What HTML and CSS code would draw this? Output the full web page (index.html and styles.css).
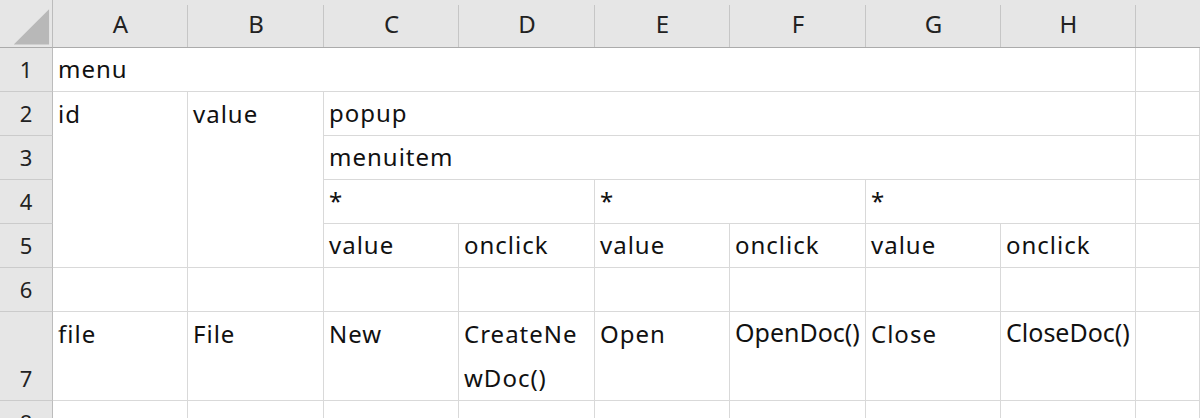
FILE: index.html
```html
<!DOCTYPE html>
<html lang="ja">
<head>
<meta charset="utf-8">
<title>menu - sheet</title>
<link rel="stylesheet" href="styles.css">
</head>
<body>
<div class="sheet">
  <!-- column headers -->
  <div class="corner">
    <svg class="corner-mark" width="53" height="48" viewBox="0 0 53 48"><polygon points="14,45 50,9 50,45" fill="#b8b8b8"/></svg>
  </div>
  <div class="ch">A</div>
  <div class="ch">B</div>
  <div class="ch">C</div>
  <div class="ch">D</div>
  <div class="ch">E</div>
  <div class="ch">F</div>
  <div class="ch">G</div>
  <div class="ch">H</div>
  <div class="ch ch-last"></div>

  <!-- row 1 -->
  <div class="rh">1</div>
  <div class="c span8">menu</div>
  <div class="c"></div>

  <!-- row 2 -->
  <div class="rh">2</div>
  <div class="c rows4 top">id</div>
  <div class="c rows4 top">value</div>
  <div class="c span6">popup</div>
  <div class="c"></div>

  <!-- row 3 -->
  <div class="rh">3</div>
  <div class="c span6">menuitem</div>
  <div class="c"></div>

  <!-- row 4 -->
  <div class="rh">4</div>
  <div class="c span2">*</div>
  <div class="c span2">*</div>
  <div class="c span2">*</div>
  <div class="c"></div>

  <!-- row 5 -->
  <div class="rh">5</div>
  <div class="c">value</div>
  <div class="c">onclick</div>
  <div class="c">value</div>
  <div class="c">onclick</div>
  <div class="c">value</div>
  <div class="c">onclick</div>
  <div class="c"></div>

  <!-- row 6 -->
  <div class="rh">6</div>
  <div class="c"></div>
  <div class="c"></div>
  <div class="c"></div>
  <div class="c"></div>
  <div class="c"></div>
  <div class="c"></div>
  <div class="c"></div>
  <div class="c"></div>
  <div class="c"></div>

  <!-- row 7 -->
  <div class="rh">7</div>
  <div class="c wrap">file</div>
  <div class="c wrap">File</div>
  <div class="c wrap">New</div>
  <div class="c wrap">CreateNewDoc()</div>
  <div class="c wrap">Open</div>
  <div class="c wrap"><span class="tight">OpenDoc()</span></div>
  <div class="c wrap">Close</div>
  <div class="c wrap"><span class="tight">CloseDoc()</span></div>
  <div class="c wrap"></div>

  <!-- row 8 -->
  <div class="rh">8</div>
  <div class="c"></div>
  <div class="c"></div>
  <div class="c"></div>
  <div class="c"></div>
  <div class="c"></div>
  <div class="c"></div>
  <div class="c"></div>
  <div class="c"></div>
  <div class="c"></div>
</div>
</body>
</html>
```

FILE: styles.css
```css
html, body {
  margin: 0;
  padding: 0;
  background: #ffffff;
  overflow: hidden;
}

.sheet {
  display: grid;
  width: 1200px;
  grid-template-columns: 53px 135px 136px 135px 136px 135px 136px 135px 135px 1fr;
  grid-template-rows: 48px repeat(6, 44px) 89px 44px;
  font-family: "Noto Sans", "Noto Sans CJK JP", sans-serif;
  color: #111111;
}

/* header strip */
.corner {
  background: #e6e6e6;
  border-right: 1px solid #bcbcbc;
  border-bottom: 1px solid #ababab;
  box-sizing: border-box;
  display: flex;
}

.corner-mark {
  display: block;
}

.ch {
  box-sizing: border-box;
  background-color: #e6e6e6;
  background-image: linear-gradient(#c6c6c6, #c6c6c6);
  background-size: 1px calc(100% - 5px);
  background-position: right bottom;
  background-repeat: no-repeat;
  border-bottom: 1px solid #ababab;
  font-size: 24px;
  line-height: 48px;
  text-align: center;
  color: #222222;
}

.ch-last {
  background-image: none;
}

.rh {
  grid-column: 1;
  box-sizing: border-box;
  background: #e6e6e6;
  border-right: 1px solid #bcbcbc;
  border-bottom: 1px solid #cbcbcb;
  font-size: 22px;
  line-height: 44px;
  color: #222222;
  display: flex;
  align-items: flex-end;
  justify-content: center;
}

/* cells */
.c {
  box-sizing: border-box;
  border-right: 1px solid #d9d9d9;
  border-bottom: 1px solid #d9d9d9;
  padding: 0 4px 0 5px;
  font-size: 24px;
  letter-spacing: 1px;
  line-height: 44px;
  display: flex;
  align-items: flex-end;
  white-space: nowrap;
  overflow: hidden;
}

.span8 { grid-column: span 8; }
.span6 { grid-column: span 6; }
.span2 { grid-column: span 2; }
.rows4 { grid-row: span 4; }

/* merged blocks keep their text on the first row */
.top {
  align-items: flex-start;
}

.wrap {
  align-items: flex-start;
  white-space: normal;
  word-break: break-all;
}

.tight {
  font-size: 25px;
  letter-spacing: 0;
  margin-top: -2px;
}
```
